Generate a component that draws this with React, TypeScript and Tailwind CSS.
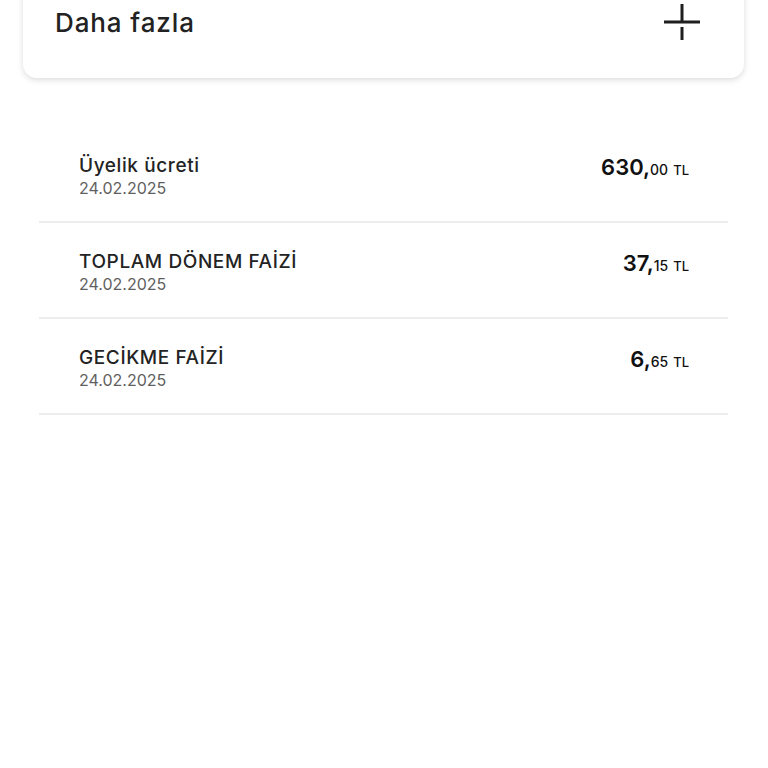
import React from "react";

interface Fee {
  title: string;
  date: string;
  whole: string;
  cents: string;
}

const fees: Fee[] = [
  { title: "Üyelik ücreti", date: "24.02.2025", whole: "630", cents: "00" },
  { title: "TOPLAM DÖNEM FAİZİ", date: "24.02.2025", whole: "37", cents: "15" },
  { title: "GECİKME FAİZİ", date: "24.02.2025", whole: "6", cents: "65" },
];

function PlusIcon() {
  return (
    <svg width="40" height="40" viewBox="0 0 40 40" fill="none" stroke="#1f1f1f" strokeWidth="3">
      <path d="M2 20H38" />
      <path d="M20 2V19" />
      <path d="M20 25V38" />
    </svg>
  );
}

export default function App() {
  return (
    <div
      className="min-h-[768px] w-full bg-white overflow-hidden"
      style={{ fontFamily: "Inter, 'Noto Sans', sans-serif" }}
    >
      {/* Collapsible card, top cut off */}
      <div className="mx-[23px] mt-[-20px] w-[721px] rounded-[14px] bg-white pt-[22px] pb-[36px] pl-[32px] pr-[42px] shadow-[0_2px_6px_rgba(0,0,0,0.14)]">
        <div className="flex h-[40px] items-center justify-between">
          <span className="text-[26px] font-medium text-[#222222] tracking-[0.9px]">Daha fazla</span>
          <PlusIcon />
        </div>
      </div>

      {/* Fee list */}
      <div className="mx-[39px] mt-[49px] w-[689px]">
        {fees.map((fee) => (
          <div
            key={fee.title}
            className="flex items-start justify-between border-b-2 border-[#ececec] pt-[25px] pb-[22px] pl-[40px] pr-[39px]"
          >
            <div className="flex flex-col pt-[2px]">
              <span className="text-[19px] leading-[23px] font-medium text-[#232323] tracking-[0.6px]">{fee.title}</span>
              <span className="text-[16px] leading-[22px] text-[#5f5f5f]">{fee.date}</span>
            </div>
            <div className="flex items-baseline pt-[1px] text-[#111111]">
              <span className="text-[22px] leading-[28px] font-semibold">{fee.whole},</span>
              <span className="text-[14px] font-medium">{fee.cents}</span>
              <span className="ml-[5px] text-[13px] font-medium">TL</span>
            </div>
          </div>
        ))}
      </div>
    </div>
  );
}
